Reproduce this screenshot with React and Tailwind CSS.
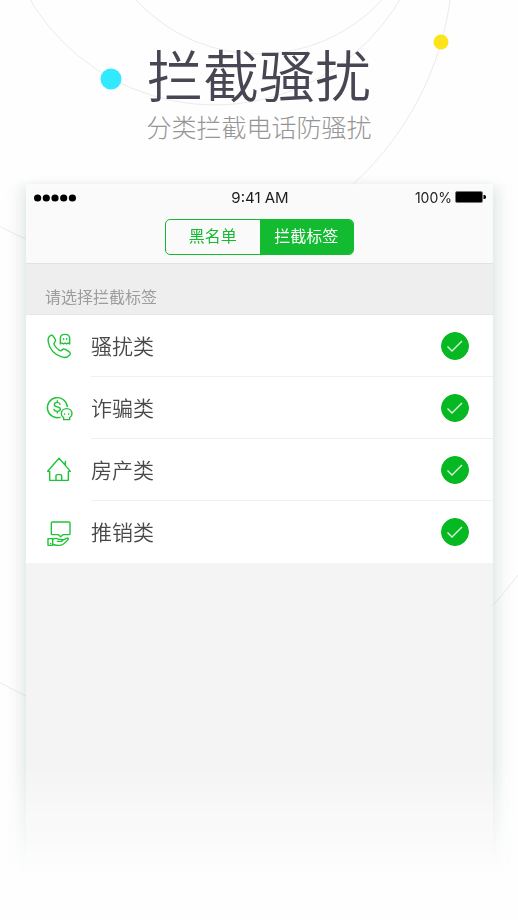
import React, { useState } from "react";

const PhoneIcon = () => (
  <svg viewBox="0 0 78 78" className="w-[26px] h-[26px] overflow-visible" fill="none" stroke="#1fc436" strokeWidth="4.2" strokeLinecap="round" strokeLinejoin="round" aria-hidden="true">
    <path d="M13 8c4-3 7-1 9 2l6 9c2 4 1 6-2 9-3 3-3 5-1 8 4 7 9 12 15 16 4 2 6 2 8-1 3-4 6-4 10-2l11 7c4 3 5 6 2 10-7 8-16 9-26 5C27 64 11 48 7 28 5 17 8 11 13 8z" />
    <path d="M43 33V16c0-8 5-12 14-12s14 4 14 12v17l-5-3-4 3-5-3-4 3-5-3z" />
    <path d="M53 17v2M62 17v2" />
  </svg>
);

const MoneyIcon = () => (
  <svg viewBox="0 0 78 78" className="w-[26px] h-[26px] overflow-visible" fill="none" stroke="#1fc436" strokeWidth="4.2" strokeLinecap="round" strokeLinejoin="round" aria-hidden="true">
    <path d="M42 67A30 30 0 1 1 64 35" />
    <path d="M42 28c-1-4-4-6-8-6-5 0-9 2-9 7 0 9 18 4 18 13 0 5-4 7-9 7-6 0-9-2-10-6M34 17v5M34 49v5" />
    <path d="M53 68c-5-3-7-7-7-12 0-9 7-15 16-15s16 6 16 15c0 5-2 9-7 12v6H53z" />
    <path d="M56 57v1M68 57v1" />
  </svg>
);

const HouseIcon = () => (
  <svg viewBox="0 0 78 78" className="w-[26px] h-[26px] overflow-visible" fill="none" stroke="#1fc436" strokeWidth="4.2" strokeLinecap="round" strokeLinejoin="round" aria-hidden="true">
    <path d="M11 43H5L39 4l19 21V13M58 25l15 18h-6v27H11V43" />
    <path d="M30 70V56c0-2 1-3 3-3h11c2 0 3 1 3 3v14" />
  </svg>
);

const HandIcon = () => (
  <svg viewBox="0 0 78 78" className="w-[26px] h-[26px] overflow-visible" fill="none" stroke="#1fc436" strokeWidth="4.2" strokeLinecap="round" strokeLinejoin="round" aria-hidden="true">
    <path d="M19 9h50c2 0 3 1 3 3v32c0 2-1 3-3 3H51l-7 6-7-6H19c-2 0-3-1-3-3V12c0-2 1-3 3-3z" />
    <path d="M6 59h14v20H6zM14 73v1" />
    <path d="M20 61c8-5 13-3 18 0h8c5 0 5 6 0 6H34M48 65l13-7c5-2 8 0 5 4-7 9-13 16-25 17-8 1-14-1-21-3" />
  </svg>
);

const categories = [
  { id: "harass", name: "骚扰类", Icon: PhoneIcon },
  { id: "fraud", name: "诈骗类", Icon: MoneyIcon },
  { id: "house", name: "房产类", Icon: HouseIcon },
  { id: "sales", name: "推销类", Icon: HandIcon },
];

const Orbits = () => (
  <svg viewBox="0 0 518 920" className="absolute inset-x-0 top-0 w-full" fill="none" stroke="#e9ebec" aria-hidden="true">
    <circle cx="259" cy="-113" r="167" />
    <circle cx="215" cy="-110" r="215" />
    <circle cx="147" cy="-42" r="306" />
    <circle cx="198" cy="335" r="400" clipPath="url(#lower)" />
    <clipPath id="lower">
      <rect x="0" y="560" width="518" height="200" />
    </clipPath>
    <circle cx="111" cy="79" r="10.5" fill="#33e9ff" stroke="none" />
    <circle cx="441" cy="42" r="7.5" fill="#fde31a" stroke="none" />
  </svg>
);

const StatusBar = () => (
  <div className="grid grid-cols-3 items-center h-7 pl-2 pr-[7px] font-['Inter',sans-serif] text-[15px] leading-5 text-[#1c1c1c]">
    <svg viewBox="0 0 42 8" className="w-[42px] h-2" aria-hidden="true">
      <circle cx="3.6" cy="4" r="3.6" />
      <circle cx="12.3" cy="4" r="3.6" />
      <circle cx="21" cy="4" r="3.6" />
      <circle cx="29.7" cy="4" r="3.6" />
      <circle cx="38.4" cy="4" r="3.6" />
    </svg>
    <span className="text-center">9:41 AM</span>
    <span className="flex items-center justify-end gap-[3px] text-sm">
      100%
      <svg viewBox="0 0 31 12" className="w-[31px] h-3 mb-0.5" aria-hidden="true">
        <rect x="0.5" y="0.5" width="27" height="11" rx="1.5" fill="#000" stroke="#777" />
        <path d="M28.5 4h1c1 0 1.500 1 1.500 2s-.5 2-1.500 2h-1z" />
      </svg>
    </span>
  </div>
);

const App = () => {
  const [tab, setTab] = useState("tags");
  const [checked, setChecked] = useState({ harass: true, fraud: true, house: true, sales: true });

  const toggle = (id) => setChecked((prev) => ({ ...prev, [id]: !prev[id] }));

  const tabClass = (name) =>
    tab === name ? "bg-[#12bb2f] text-white" : "bg-transparent text-[#12bb2f]";

  return (
    <div className="relative min-h-screen overflow-hidden bg-[#fefefe] font-['Liberation_Sans','Noto_Sans_CJK_SC',sans-serif]">
      <Orbits />

      <header className="relative pt-[46px] text-center">
        <h1 className="text-[56px] leading-16 font-[350] text-[#474652]">拦截骚扰</h1>
        <p className="mt-0.5 text-[25px] leading-8 font-light text-[#959595]">分类拦截电话防骚扰</p>
      </header>

      {/* The mask fades the card and its shadow out at the bottom */}
      <div className="relative mt-6 pt-4 pl-[26px] pr-[25px] mask-[linear-gradient(to_bottom,transparent_8px,black_20px,black_600px,transparent_710px)]">
        <main className="h-[720px] bg-[#f4f4f4] shadow-[0_0_18px_rgba(110,145,140,0.32)]">
          <div className="h-20 bg-[#fafafa] border-b border-[#e2e2e2]">
            <StatusBar />
            <div className="flex justify-center pt-[7px]">
              <div role="tablist" className="grid grid-cols-2 w-[189px] h-9 overflow-hidden rounded-[5px] border border-[#12bb2f] text-base leading-6">
                <button type="button" role="tab" aria-selected={tab === "blacklist"} onClick={() => setTab("blacklist")} className={tabClass("blacklist")}>
                  黑名单
                </button>
                <button type="button" role="tab" aria-selected={tab === "tags"} onClick={() => setTab("tags")} className={tabClass("tags")}>
                  拦截标签
                </button>
              </div>
            </div>
          </div>

          <h2 className="h-[51px] pt-[22px] pl-[19px] bg-[#eeeeee] border-b border-[#e6e6e6] text-base leading-6 text-[#9c9c9c]">
            请选择拦截标签
          </h2>

          <ul className="bg-white">
            {categories.map(({ id, name, Icon }) => (
              <li key={id}>
                <label className="group flex items-center gap-[19px] h-[62px] pl-5 cursor-pointer">
                  <Icon />
                  <span className="flex flex-1 items-center justify-between h-full pr-6 border-b border-[#efefef] group-[li:last-child>&]:border-transparent">
                    <span className="pt-0.5 text-[21px] leading-8 font-[350] text-[#484848]">{name}</span>
                    <span className="grid">
                      <input
                        type="checkbox"
                        checked={checked[id]}
                        onChange={() => toggle(id)}
                        className="peer col-start-1 row-start-1 appearance-none size-7 rounded-full border border-[#cccccc] checked:border-[#06b821] checked:bg-[#06b821]"
                      />
                      <svg viewBox="0 0 28 28" className="col-start-1 row-start-1 size-7 pointer-events-none opacity-0 peer-checked:opacity-100" fill="none" stroke="#e4f8e6" strokeWidth="1.4" aria-hidden="true">
                        <path d="M6.500 14.500l4.500 4.500L21 9" />
                      </svg>
                    </span>
                  </span>
                </label>
              </li>
            ))}
          </ul>
        </main>
      </div>
    </div>
  );
};

export default App;
